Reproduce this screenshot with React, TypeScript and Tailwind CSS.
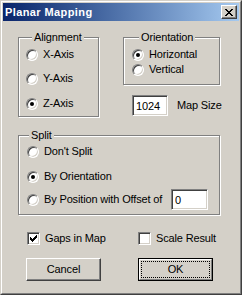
import type { ReactNode } from 'react';

const sunken =
  'border border-t-[#808080] border-l-[#808080] border-r-white border-b-white shadow-[inset_1px_1px_0_#404040,inset_-1px_-1px_0_#d4d0c8]';

function Pixels({ rows, w, h }: { rows: string[]; w: number; h: number }) {
  return (
    <svg width={w} height={h} viewBox={`0 0 ${w} ${h}`} shapeRendering="crispEdges">
      {rows.map((row, y) =>
        row.split('').map((c, x) => (c === 'X' ? <rect key={`${x}-${y}`} x={x} y={y} width={1} height={1} fill="#000" /> : null))
      )}
    </svg>
  );
}

const closeGlyph = ['XX....XX', '.XX..XX.', '..XXXX..', '...XX...', '..XXXX..', '.XX..XX.', 'XX....XX'];
const checkGlyph = ['......X', '.....XX', 'X...XXX', 'XX.XXX.', 'XXXXX..', '.XXX...', '..X....'];

function Radio({ checked }: { checked?: boolean }) {
  return (
    <span className={`flex h-[12px] w-[12px] flex-none items-center justify-center rounded-full bg-white ${sunken}`}>
      {checked && <span className="h-[4px] w-[4px] rounded-full bg-black" />}
    </span>
  );
}

function RadioRow({ label, checked, className = '' }: { label: string; checked?: boolean; className?: string }) {
  return (
    <label className={`flex h-[13px] items-center gap-[5px] ${className}`}>
      <Radio checked={checked} />
      <span className="whitespace-nowrap">{label}</span>
    </label>
  );
}

function Checkbox({ label, checked }: { label: string; checked?: boolean }) {
  return (
    <label className="flex h-[13px] items-center gap-[5px]">
      <span className={`flex h-[13px] w-[13px] flex-none items-center justify-center bg-white ${sunken}`}>
        {checked && <Pixels rows={checkGlyph} w={7} h={7} />}
      </span>
      <span className="whitespace-nowrap">{label}</span>
    </label>
  );
}

function Group({ title, legendClass, className, children }: { title: string; legendClass: string; className: string; children: ReactNode }) {
  return (
    <fieldset className={`border border-[#808080] shadow-[inset_1px_1px_0_#fff,1px_1px_0_#fff] ${className}`}>
      <legend className={`bg-[#d4d0c8] px-[2px] leading-[13px] ${legendClass}`}>{title}</legend>
      {children}
    </fieldset>
  );
}

function TextBox({ value, className }: { value: string; className: string }) {
  return (
    <input
      type="text"
      defaultValue={value}
      className={`h-[21px] flex-none bg-white px-[3px] text-[11px] leading-[13px] outline-none ${sunken} ${className}`}
    />
  );
}

export default function App() {
  return (
    <div className="h-[295px] w-[242px] border border-t-[#d4d0c8] border-l-[#d4d0c8] border-r-[#404040] border-b-[#404040] bg-[#d4d0c8] font-['Liberation_Sans',Arial,sans-serif] text-[11px] tracking-[-0.15px] text-black">
      <div className="flex h-full flex-col border border-t-white border-l-white border-r-[#808080] border-b-[#808080] p-[1px]">
        {/* title bar */}
        <div className="flex h-[18px] flex-none items-center justify-between bg-linear-to-r from-[#0a246a] to-[#a6caf0] pl-[2px] pr-[2px]">
          <span className="text-[11px] font-bold leading-[18px] tracking-[0.4px] text-white">Planar Mapping</span>
          <button className="flex h-[14px] w-[16px] items-center justify-center border border-t-white border-l-white border-r-[#404040] border-b-[#404040] bg-[#d4d0c8] shadow-[inset_-1px_-1px_0_#808080]">
            <Pixels rows={closeGlyph} w={8} h={7} />
          </button>
        </div>

        <div className="flex flex-col pl-[15px] pt-[10px]">
          <div className="flex">
            <Group title="Alignment" legendClass="ml-[6px]" className="w-[81px] pb-[6px] pl-[7px] pt-[4px]">
              <div className="flex flex-col">
                <RadioRow label="X-Axis" />
                <RadioRow label="Y-Axis" className="mt-[11px]" />
                <RadioRow label="Z-Axis" checked className="mt-[12px]" />
              </div>
            </Group>

            <div className="ml-[24px] flex flex-col">
              <Group title="Orientation" legendClass="ml-[7px]" className="w-[97px] pb-[8px] pl-[8px] pt-[4px]">
                <div className="flex flex-col gap-[2px]">
                  <RadioRow label="Horizontal" checked />
                  <RadioRow label="Vertical" />
                </div>
              </Group>
              <div className="mt-[10px] flex items-center pl-[9px]">
                <TextBox value="1024" className="w-[36px]" />
                <span className="ml-[9px]">Map Size</span>
              </div>
            </div>
          </div>

          <Group title="Split" legendClass="ml-[2px]" className="mt-[12px] w-[202px] pb-[4px] pl-[8px] pt-[3px]">
            <div className="flex flex-col">
              <RadioRow label="Don't Split" />
              <RadioRow label="By Orientation" checked className="mt-[12px]" />
              <div className="mt-[6px] flex items-center">
                <label className="flex w-[144px] flex-none items-center gap-[5px]">
                  <Radio />
                  <span className="whitespace-nowrap">By Position with Offset of</span>
                </label>
                <TextBox value="0" className="w-[37px]" />
              </div>
            </div>
          </Group>

          <div className="ml-[9px] mt-[17px] flex">
            <div className="w-[111px]">
              <Checkbox label="Gaps in Map" checked />
            </div>
            <Checkbox label="Scale Result" />
          </div>

          <div className="ml-[8px] mt-[13px] flex gap-[37px]">
            <button className="h-[23px] w-[75px] border border-t-white border-l-white border-r-[#404040] border-b-[#404040] bg-[#d4d0c8] shadow-[inset_-1px_-1px_0_#808080]">
              Cancel
            </button>
            <button className="h-[23px] w-[75px] border border-black bg-[#d4d0c8]">
              <span className="relative flex h-full w-full items-center justify-center border border-t-white border-l-white border-r-[#808080] border-b-[#808080]">
                <span className="absolute inset-[1px] border border-dotted border-black" />
                OK
              </span>
            </button>
          </div>
        </div>
      </div>
    </div>
  );
}
